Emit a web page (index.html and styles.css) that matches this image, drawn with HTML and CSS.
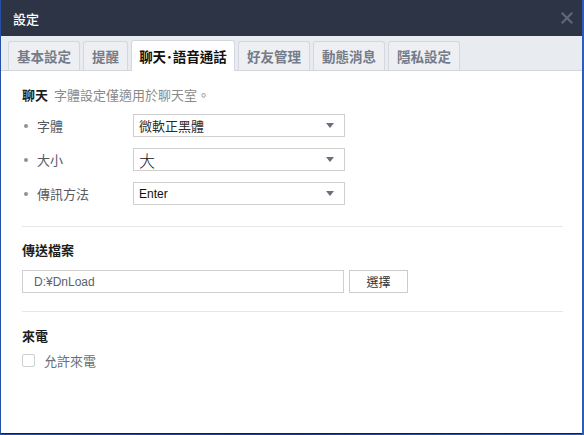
FILE: index.html
```html
<!DOCTYPE html>
<html lang="zh-Hant">
<head>
<meta charset="utf-8">
<title>設定</title>
<link rel="stylesheet" href="styles.css">
</head>
<body>
<div class="window">
  <div class="titlebar">
    <span class="title">設定</span>
    <svg class="close" width="12" height="12" viewBox="0 0 12 12"><path d="M1.5 1.5L10.5 10.5M10.5 1.5L1.5 10.5" stroke="#5f6778" stroke-width="2.2" stroke-linecap="square"/></svg>
  </div>
  <div class="tabs">
    <div class="tab">基本設定</div>
    <div class="tab">提醒</div>
    <div class="tab active">聊天･語音通話</div>
    <div class="tab">好友管理</div>
    <div class="tab">動態消息</div>
    <div class="tab">隱私設定</div>
  </div>
  <div class="content">
    <div class="section first">
      <div class="heading">聊天 <span class="hint">字體設定僅適用於聊天室。</span></div>
      <div class="row">
        <span class="label"><span class="dot"></span>字體</span>
        <div class="select"><span class="val">微軟正黑體</span><span class="arrow"></span></div>
      </div>
      <div class="row">
        <span class="label"><span class="dot"></span>大小</span>
        <div class="select"><span class="val big">大</span><span class="arrow"></span></div>
      </div>
      <div class="row">
        <span class="label"><span class="dot"></span>傳訊方法</span>
        <div class="select"><span class="val latin">Enter</span><span class="arrow"></span></div>
      </div>
    </div>
    <div class="section second">
      <div class="heading">傳送檔案</div>
      <div class="filerow">
        <div class="input">D:¥DnLoad</div>
        <div class="button">選擇</div>
      </div>
    </div>
    <div class="section">
      <div class="heading">來電</div>
      <div class="check"><span class="box"></span><span class="check-label">允許來電</span></div>
    </div>
  </div>
</div>
</body>
</html>
```

FILE: styles.css
```css
html, body {
  margin: 0;
  padding: 0;
}
body {
  width: 584px;
  height: 435px;
  overflow: hidden;
  background: linear-gradient(90deg, #2450a6 0%, #1c3f8e 50%, #2a5fb8 100%);
  font-family: "Noto Sans CJK TC", "Liberation Sans", sans-serif;
}
.window {
  margin-left: 1px;
  width: 581px;
  height: 433px;
  background: #ffffff;
  border-bottom: 1px solid #1b2130;
  display: flex;
  flex-direction: column;
}
.titlebar {
  height: 36px;
  flex: none;
  background: #2d3446;
  display: flex;
  align-items: center;
  justify-content: space-between;
  padding: 0 9px 0 12px;
}
.title {
  color: #ffffff;
  font-size: 13px;
  font-weight: 500;
}
.tabs {
  flex: none;
  height: 35px;
  box-sizing: border-box;
  background: #e8ebf0;
  border-bottom: 1px solid #d2d6dc;
  display: flex;
  align-items: flex-end;
  gap: 3px;
  padding-left: 7px;
}
.tab {
  height: 29px;
  box-sizing: border-box;
  padding: 0 6px;
  border: 1px solid #d4d8de;
  border-bottom: none;
  border-radius: 3px 3px 0 0;
  background: #edeff3;
  color: #757b88;
  font-size: 13.5px;
  font-weight: 700;
  display: flex;
  align-items: center;
  justify-content: center;
}
.tab:nth-child(1), .tab:nth-child(4), .tab:nth-child(5), .tab:nth-child(6) { width: 72px; }
.tab:nth-child(2) { width: 45px; }
.tab.active {
  width: 104px;
  height: 31px;
  margin-bottom: -1px;
  background: #ffffff;
  color: #111111;
}
.content {
  padding: 0 19px 0 21px;
}
.section {
  border-top: 1px solid #e6e6e6;
  padding: 15px 0 19px;
}
.section.first {
  border-top: none;
  padding: 15px 0 21px;
}
.section.second {
  padding: 14px 0 18px;
}
.heading {
  font-size: 13px;
  font-weight: 700;
  color: #1e1e1e;
  line-height: 18px;
}
.hint {
  font-weight: 400;
  color: #8a8a8a;
  margin-left: 3px;
}
.row {
  display: flex;
  align-items: center;
  margin-top: 10px;
}
.row + .row {
  margin-top: 11px;
}
.label {
  width: 111px;
  font-size: 13px;
  color: #555a63;
  display: flex;
  align-items: center;
}
.dot {
  width: 4px;
  height: 4px;
  border-radius: 50%;
  background: #8d939c;
  margin: 0 9px 0 2px;
}
.select {
  width: 212px;
  height: 23px;
  box-sizing: border-box;
  border: 1px solid #cfcfcf;
  display: flex;
  align-items: center;
  justify-content: space-between;
  padding: 0 10px 0 5px;
}
.val {
  font-size: 13px;
  color: #2a2a2a;
}
.val.big {
  font-size: 16px;
  font-weight: 300;
  color: #111;
}
.val.latin {
  font-family: "Liberation Sans", sans-serif;
  font-size: 12px;
  color: #111;
}
.arrow {
  width: 0;
  height: 0;
  border-left: 4px solid transparent;
  border-right: 4px solid transparent;
  border-top: 5px solid #68707e;
}
.filerow {
  display: flex;
  gap: 5px;
  margin-top: 11px;
}
.input {
  width: 322px;
  height: 23px;
  box-sizing: border-box;
  border: 1px solid #d0d0d0;
  padding-left: 11px;
  font-family: "Liberation Sans", "Noto Sans CJK TC", sans-serif;
  font-size: 12px;
  color: #5a6170;
  display: flex;
  align-items: center;
}
.button {
  width: 59px;
  height: 23px;
  box-sizing: border-box;
  border: 1px solid #cccccc;
  font-size: 12px;
  color: #333;
  display: flex;
  align-items: center;
  justify-content: center;
}
.check {
  display: flex;
  align-items: center;
  margin-top: 6px;
}
.box {
  width: 13px;
  height: 13px;
  box-sizing: border-box;
  border: 1px solid #cfcfcf;
  border-radius: 2px;
  margin-right: 9px;
}
.check-label {
  font-size: 13px;
  color: #6a6f78;
}
```
